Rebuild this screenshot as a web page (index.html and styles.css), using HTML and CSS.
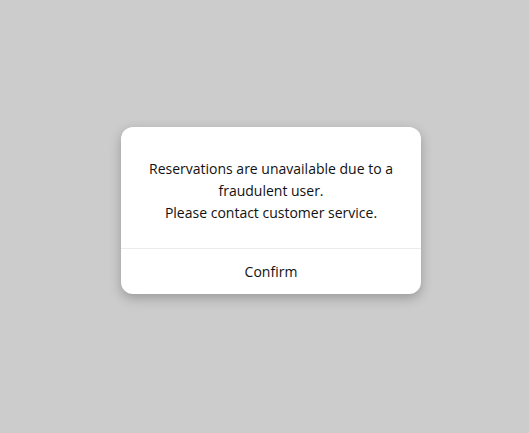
FILE: index.html
```html
<!DOCTYPE html>
<html>
<head>
<meta charset="utf-8">
<link rel="stylesheet" href="styles.css">
</head>
<body>
<div class="stage">
  <div class="dialog">
    <div class="message">
      <p>Reservations are unavailable due to a fraudulent user.</p>
      <p>Please contact customer service.</p>
    </div>
    <div class="actions">
      <button class="confirm">Confirm</button>
    </div>
  </div>
</div>
</body>
</html>
```
FILE: styles.css
```css
html, body {
  margin: 0;
  height: 100%;
  background: #cccccc;
}
.stage {
  box-sizing: border-box;
  height: 100%;
  padding: 127px 0 0 121px;
  font-family: "Open Sans", "Noto Sans", sans-serif;
}
.dialog {
  width: 300px;
  background: #ffffff;
  border-radius: 12px;
  box-shadow: 0 4px 12px rgba(0, 0, 0, 0.25);
  overflow: hidden;
}
.message {
  padding: 31px 22px 24px;
  text-align: center;
  font-size: 14px;
  line-height: 22px;
  color: #111111;
  border-bottom: 1px solid #ececec;
}
.message p {
  margin: 0;
}
.actions {
  display: flex;
}
.confirm {
  flex: 1;
  height: 45px;
  border: 0;
  background: transparent;
  font-family: inherit;
  font-size: 14px;
  color: #111111;
  padding: 0;
}
```
